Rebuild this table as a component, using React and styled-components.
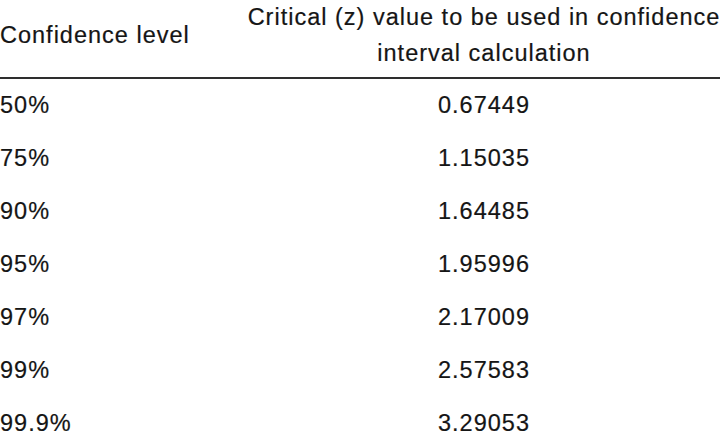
import styled, { createGlobalStyle } from "styled-components";

const GlobalStyle = createGlobalStyle`
html, body {
    margin: 0;
    padding: 0;
    background: #fff;
    overflow: hidden;
}
body {
    width: 720px;
    height: 437px;
}
`

// 표 전체 (스크린샷 상단이 살짝 잘려 있음)
const Table = styled.div`
display: grid;
grid-template-columns: 234px 500px;
margin: -1px 0 0 0;
font-family: "Liberation Sans", Arial, Helvetica, sans-serif;
font-size: 23.5px;
letter-spacing: 1px;
color: #151515;
-webkit-text-stroke: 0.2px #151515;
`
const HeadCell = styled.div`
display: flex;
align-items: center;
justify-content: ${props => props.center ? 'center' : 'flex-start'};
text-align: ${props => props.center ? 'center' : 'left'};
line-height: 36px;
padding-bottom: 6px;
border-bottom: 2px solid #2e2e2e;
white-space: nowrap;
`
const Cell = styled.div`
height: 53px;
line-height: 53px;
text-align: ${props => props.center ? 'center' : 'left'};
white-space: nowrap;
`

const rows = [
    ['50%', '0.67449'],
    ['75%', '1.15035'],
    ['90%', '1.64485'],
    ['95%', '1.95996'],
    ['97%', '2.17009'],
    ['99%', '2.57583'],
    ['99.9%', '3.29053'],
]

const App = () => {
    return (
        <>
            <GlobalStyle />
            <Table>
                <HeadCell>Confidence level</HeadCell>
                <HeadCell center>
                    Critical (z) value to be used in confidence<br />
                    interval calculation
                </HeadCell>
                {
                    rows.map(([level, z]) => (
                        <>
                            <Cell key={level}>{level}</Cell>
                            <Cell key={z} center>{z}</Cell>
                        </>
                    ))
                }
            </Table>
        </>
    )
}

export default App;
